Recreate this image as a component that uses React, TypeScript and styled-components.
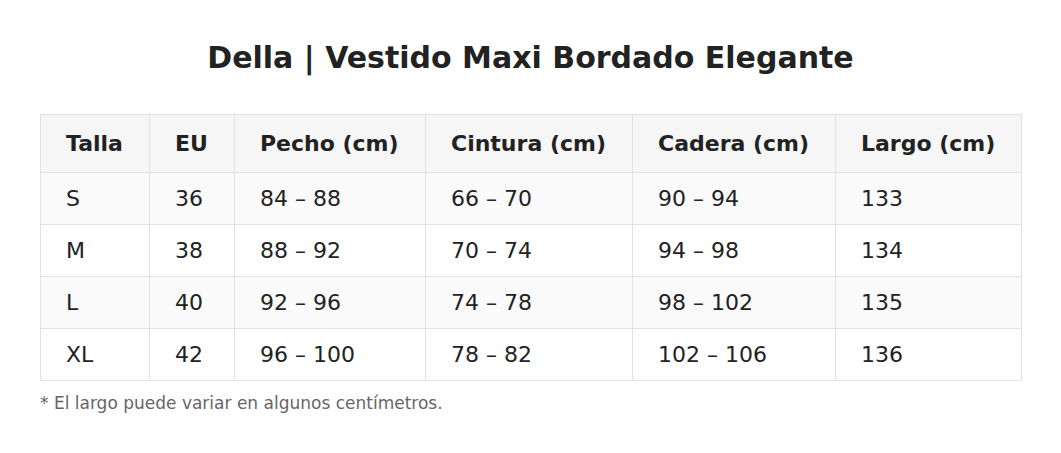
import React from 'react';
import styled, { createGlobalStyle } from 'styled-components';

interface SizeRow {
  size: string;
  eu: number;
  bust: string;
  waist: string;
  hip: string;
  length: number;
}

const rows: SizeRow[] = [
  { size: 'S', eu: 36, bust: '84 – 88', waist: '66 – 70', hip: '90 – 94', length: 133 },
  { size: 'M', eu: 38, bust: '88 – 92', waist: '70 – 74', hip: '94 – 98', length: 134 },
  { size: 'L', eu: 40, bust: '92 – 96', waist: '74 – 78', hip: '98 – 102', length: 135 },
  { size: 'XL', eu: 42, bust: '96 – 100', waist: '78 – 82', hip: '102 – 106', length: 136 },
];

const columns = [
  { label: 'Talla', width: 109 },
  { label: 'EU', width: 85 },
  { label: 'Pecho (cm)', width: 191 },
  { label: 'Cintura (cm)', width: 207 },
  { label: 'Cadera (cm)', width: 203 },
  { label: 'Largo (cm)', width: 186 },
];

function App() {
  return (
    <>
      <GlobalStyle />
      <Page>
        <Title>Della | Vestido Maxi Bordado Elegante</Title>
        <SizeTable>
          <colgroup>
            {columns.map((c) => (
              <col key={c.label} style={{ width: c.width }} />
            ))}
          </colgroup>
          <thead>
            <tr>
              {columns.map((c) => (
                <HeadCell key={c.label}>{c.label}</HeadCell>
              ))}
            </tr>
          </thead>
          <tbody>
            {rows.map((r, i) => (
              <BodyRow key={r.size} $striped={i % 2 === 0}>
                <Cell>{r.size}</Cell>
                <Cell>{r.eu}</Cell>
                <Cell>{r.bust}</Cell>
                <Cell>{r.waist}</Cell>
                <Cell>{r.hip}</Cell>
                <Cell>{r.length}</Cell>
              </BodyRow>
            ))}
          </tbody>
        </SizeTable>
        <Note>* El largo puede variar en algunos centímetros.</Note>
      </Page>
    </>
  );
}

export default App;

const GlobalStyle = createGlobalStyle`
  body {
    margin: 0;
    background: #ffffff;
    font-family: 'DejaVu Sans', 'Liberation Sans', sans-serif;
    color: #222222;
  }
`;

const Page = styled.div`
  padding: 40px 40px 0;
`;

const Title = styled.h1`
  margin: 0 0 38px;
  text-align: center;
  font-size: 30px;
  font-weight: bold;
  line-height: 36px;
  color: #222222;
`;

const SizeTable = styled.table`
  width: 100%;
  border-collapse: collapse;
  table-layout: fixed;
  font-size: 22px;
`;

const HeadCell = styled.th`
  height: 57px;
  padding: 0 25px;
  text-align: left;
  font-weight: bold;
  background: #f6f6f6;
  border: 1px solid #e2e2e2;
  line-height: 26px;
  white-space: nowrap;
`;

const BodyRow = styled.tr<{ $striped: boolean }>`
  background: ${(p) => (p.$striped ? '#fafafa' : '#ffffff')};
`;

const Cell = styled.td`
  height: 51px;
  padding: 0 25px;
  border: 1px solid #e2e2e2;
  line-height: 26px;
  white-space: nowrap;
`;

const Note = styled.p`
  margin: 12px 0 0;
  font-size: 17px;
  line-height: 20px;
  color: #666666;
`;
